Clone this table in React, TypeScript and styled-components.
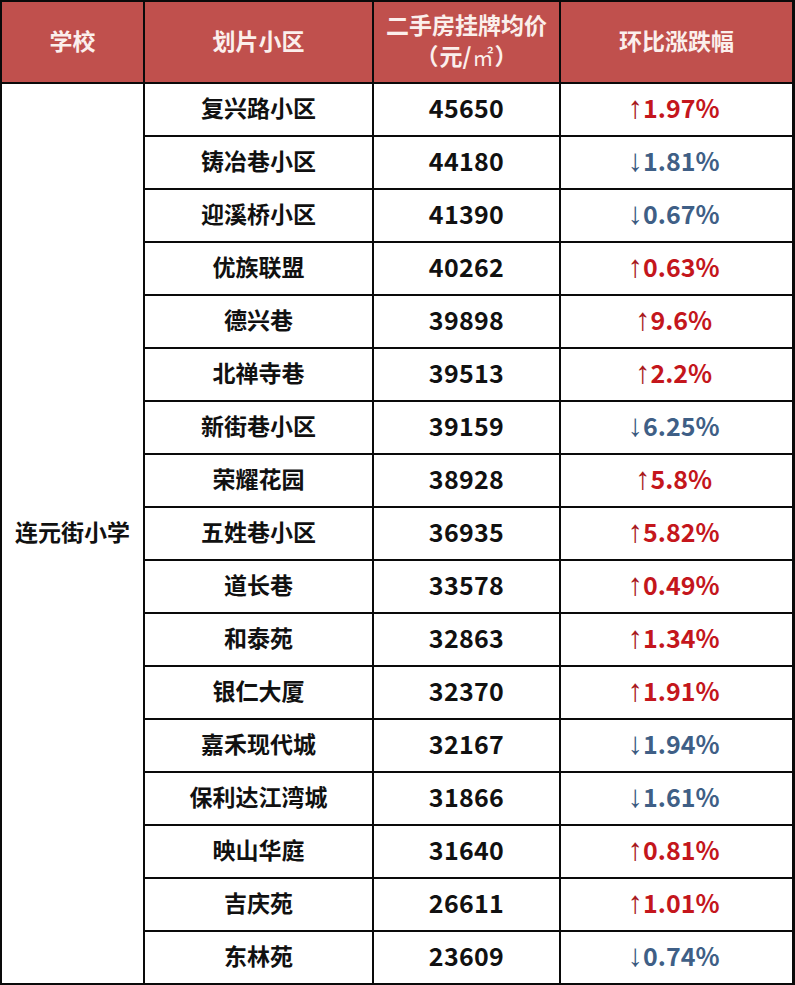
import * as React from "react"
import styled, { createGlobalStyle } from "styled-components"

const GlobalStyle = createGlobalStyle`
    html, body {
        margin: 0;
        padding: 0;
        background: #fff;
    }
`

type Row = { name: string, price: number, up: boolean, change: string }

const rows: Row[] = [
    { name: "复兴路小区", price: 45650, up: true, change: "1.97%" },
    { name: "铸冶巷小区", price: 44180, up: false, change: "1.81%" },
    { name: "迎溪桥小区", price: 41390, up: false, change: "0.67%" },
    { name: "优族联盟", price: 40262, up: true, change: "0.63%" },
    { name: "德兴巷", price: 39898, up: true, change: "9.6%" },
    { name: "北禅寺巷", price: 39513, up: true, change: "2.2%" },
    { name: "新街巷小区", price: 39159, up: false, change: "6.25%" },
    { name: "荣耀花园", price: 38928, up: true, change: "5.8%" },
    { name: "五姓巷小区", price: 36935, up: true, change: "5.82%" },
    { name: "道长巷", price: 33578, up: true, change: "0.49%" },
    { name: "和泰苑", price: 32863, up: true, change: "1.34%" },
    { name: "银仁大厦", price: 32370, up: true, change: "1.91%" },
    { name: "嘉禾现代城", price: 32167, up: false, change: "1.94%" },
    { name: "保利达江湾城", price: 31866, up: false, change: "1.61%" },
    { name: "映山华庭", price: 31640, up: true, change: "0.81%" },
    { name: "吉庆苑", price: 26611, up: true, change: "1.01%" },
    { name: "东林苑", price: 23609, up: false, change: "0.74%" },
]

const FONT = `"Noto Sans CJK SC", "Microsoft YaHei", sans-serif`

// 表格外框与分隔线都用网格的 gap 露出黑底
const Table = styled.div`
    width: 795px;
    height: 985px;
    box-sizing: border-box;
    display: grid;
    grid-template-columns: 141px 227px 185px 231px;
    grid-template-rows: 80px repeat(17, 51px);
    gap: 2px;
    padding: 2px 3px 2px 2px;
    background: #0a0a0a;
    font-family: ${FONT};
    font-weight: 700;
`

const HeadCell = styled.div`
    background: #c0504d;
    color: #fbefec;
    font-size: 23px;
    line-height: 31px;
    display: flex;
    flex-direction: column;
    align-items: center;
    justify-content: center;
    text-align: center;
    padding-bottom: 3px;
`

const Unit = styled.span`
    display: flex;
    align-items: baseline;
    gap: 1px;
`

const Sq = styled.span`
    font-weight: 400;
    font-size: 21px;
`

const Cell = styled.div`
    background: #fff;
    color: #111;
    font-size: 23px;
    display: flex;
    align-items: center;
    justify-content: center;
    white-space: nowrap;
    padding-bottom: 5px;
`

const SchoolCell = styled(Cell)`
    grid-column: 1;
    grid-row: 2 / span 17;
`

const Num = styled(Cell)`
    font-size: 25px;
    letter-spacing: 0.3px;
`

const Change = styled(Cell)<{ $up: boolean }>`
    color: ${p => p.$up ? "#c4161c" : "#3f5f86"};
    font-size: 25px;
    align-items: baseline;
    padding-top: 5px;
    padding-bottom: 0;
    padding-right: 6px;
`

const Arrow = styled.span<{ $up: boolean }>`
    font-family: "Liberation Sans", sans-serif;
    font-weight: 400;
    font-size: 31px;
    line-height: 1;
    color: ${p => p.$up ? "#a8181c" : "#3a5a80"};
`

export default function App() {
    return (
        <>
            <GlobalStyle />
            <Table>
                <HeadCell>学校</HeadCell>
                <HeadCell>划片小区</HeadCell>
                <HeadCell>
                    <span>二手房挂牌均价</span>
                    <Unit>
                        <span>（</span>
                        <span>元/</span>
                        <Sq>㎡</Sq>
                        <span>）</span>
                    </Unit>
                </HeadCell>
                <HeadCell>环比涨跌幅</HeadCell>
                <SchoolCell>连元街小学</SchoolCell>
                {rows.map((r, i) => (
                    <React.Fragment key={r.name}>
                        <Cell style={{ gridColumn: 2, gridRow: i + 2 }}>{r.name}</Cell>
                        <Num style={{ gridColumn: 3, gridRow: i + 2 }}>{r.price}</Num>
                        <Change $up={r.up} style={{ gridColumn: 4, gridRow: i + 2 }}>
                            <Arrow $up={r.up}>{r.up ? "↑" : "↓"}</Arrow>{r.change}
                        </Change>
                    </React.Fragment>
                ))}
            </Table>
        </>
    )
}
